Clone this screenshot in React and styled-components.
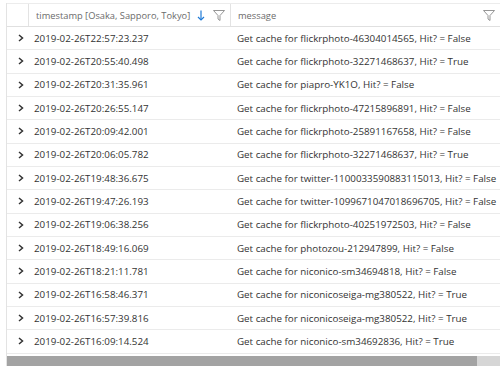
import React from "react";
import styled, { createGlobalStyle } from "styled-components";

const Global = createGlobalStyle`
  html, body { margin: 0; padding: 0; background: #fff; }
  body { font-family: "Segoe UI", "Open Sans", "Noto Sans", sans-serif; overflow: hidden; }
`;

const rows = [
  ["2019-02-26T22:57:23.237", "Get cache for flickrphoto-46304014565, Hit? = False"],
  ["2019-02-26T20:55:40.498", "Get cache for flickrphoto-32271468637, Hit? = True"],
  ["2019-02-26T20:31:35.961", "Get cache for piapro-YK1O, Hit? = False"],
  ["2019-02-26T20:26:55.147", "Get cache for flickrphoto-47215896891, Hit? = False"],
  ["2019-02-26T20:09:42.001", "Get cache for flickrphoto-25891167658, Hit? = False"],
  ["2019-02-26T20:06:05.782", "Get cache for flickrphoto-32271468637, Hit? = True"],
  ["2019-02-26T19:48:36.675", "Get cache for twitter-1100033590883115013, Hit? = False"],
  ["2019-02-26T19:47:26.193", "Get cache for twitter-1099671047018696705, Hit? = False"],
  ["2019-02-26T19:06:38.256", "Get cache for flickrphoto-40251972503, Hit? = False"],
  ["2019-02-26T18:49:16.069", "Get cache for photozou-212947899, Hit? = False"],
  ["2019-02-26T18:21:11.781", "Get cache for niconico-sm34694818, Hit? = False"],
  ["2019-02-26T16:58:46.371", "Get cache for niconicoseiga-mg380522, Hit? = True"],
  ["2019-02-26T16:57:39.816", "Get cache for niconicoseiga-mg380522, Hit? = True"],
  ["2019-02-26T16:09:14.524", "Get cache for niconico-sm34692836, Hit? = True"],
];

const Page = styled.div`
  width: 500px;
  height: 368px;
  padding: 3px 0 0 6px;
  box-sizing: border-box;
  overflow: hidden;
`;

const Grid = styled.div`
  border-left: 1px solid #e3e3e3;
  width: 494px;
  display: flex;
  flex-direction: column;
`;

const Header = styled.div`
  display: grid;
  grid-template-columns: 22px 202px 1fr;
  height: 24px;
  border-top: 1px solid #ececec;
  border-bottom: 1px solid #e0e0e0;
  box-sizing: border-box;
`;

const HeadCell = styled.div`
  display: flex;
  align-items: center;
  min-width: 0;
  padding: 0 ${(p) => (p.$pad ? "5px" : "0")} 0 ${(p) => (p.$pad ? "7px" : "0")};
  border-right: 1px solid #e3e3e3;
  font-size: 9.3px;
  color: #6b6b6b;
  white-space: nowrap;
  gap: 5px;
`;

const HeadLabel = styled.span`
  flex: 1;
  min-width: 0;
  overflow: hidden;
`;

const Icon = styled.svg`
  flex-shrink: 0;
  margin-left: ${(p) => p.$ml || 0}px;
`;

const Row = styled.div`
  display: grid;
  grid-template-columns: 22px 202px 1fr;
  height: 23.33px;
  border-bottom: 1px solid #ebebeb;
  box-sizing: border-box;
  align-items: center;
  font-size: 9.8px;
  color: #333;
  white-space: nowrap;
`;

const Expander = styled.div`
  display: flex;
  justify-content: center;
  align-items: center;
  padding-left: 5px;
`;

const Cell = styled.div`
  padding-left: ${(p) => p.$pl || 5}px;
  overflow: hidden;
`;

const ScrollTrack = styled.div`
  margin-top: 2px;
  height: 10px;
  background: #d6d6d6;
  display: flex;
`;

const ScrollThumb = styled.div`
  width: 470px;
  background: #a3a3a3;
`;

const Chevron = () => (
  <svg width="6" height="8" viewBox="0 0 6 8">
    <polyline points="1,1 4.5,4 1,7" fill="none" stroke="#333" strokeWidth="1.5" />
  </svg>
);

const Filter = ({ ml }) => (
  <Icon $ml={ml} width="12" height="11" viewBox="0 0 12 11">
    <path d="M0.5 0.5 H11.5 L7 5.5 V10.5 L5 9 V5.5 Z" fill="none" stroke="#8a8a8a" strokeWidth="0.9" strokeLinejoin="round" />
  </Icon>
);

const SortArrow = () => (
  <Icon width="8" height="11" viewBox="0 0 8 11">
    <line x1="4" y1="0.5" x2="4" y2="10" stroke="#1f7ad6" strokeWidth="1.2" />
    <polyline points="1,7 4,10 7,7" fill="none" stroke="#1f7ad6" strokeWidth="1.2" />
  </Icon>
);

export default function App() {
  return (
    <>
      <Global />
      <Page>
        <Grid>
          <Header>
            <HeadCell />
            <HeadCell $pad>
              <HeadLabel>timestamp [Osaka, Sapporo, Tokyo]</HeadLabel>
              <SortArrow />
              <Filter ml={3} />
            </HeadCell>
            <HeadCell $pad>
              <HeadLabel>message</HeadLabel>
              <Filter />
            </HeadCell>
          </Header>
          {rows.map(([t, m], i) => (
            <Row key={i}>
              <Expander>
                <Chevron />
              </Expander>
              <Cell $pl={5}>{t}</Cell>
              <Cell $pl={6}>{m}</Cell>
            </Row>
          ))}
          <ScrollTrack>
            <ScrollThumb />
          </ScrollTrack>
        </Grid>
      </Page>
    </>
  );
}
